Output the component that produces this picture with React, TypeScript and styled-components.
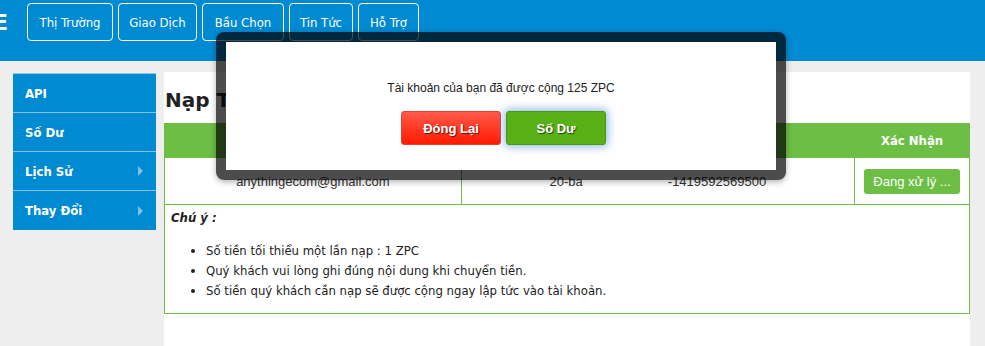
import React from "react";
import styled, { createGlobalStyle } from "styled-components";

const Global = createGlobalStyle`
  html, body { margin: 0; padding: 0; background: #eeeeee; }
  body { font-family: "DejaVu Sans", Verdana, sans-serif; font-stretch: condensed; overflow: hidden; }
  * { box-sizing: border-box; }
`;

const Page = styled.div`
  width: 985px;
  height: 346px;
  position: relative;
  background: #eeeeee;
  overflow: hidden;
`;

const Header = styled.header`
  height: 61px;
  background: #008ad2;
  display: flex;
  align-items: flex-start;
  padding-top: 3px;
  gap: 5px;
`;

const Logo = styled.div`
  width: 29px;
  margin-left: -7px;
  height: 38px;
  display: flex;
  align-items: center;
  color: #fff;
  font: bold 22px "DejaVu Sans", Verdana, sans-serif;
  font-stretch: normal;
`;

const NavButton = styled.a<{ $w: number }>`
  width: ${(p) => p.$w}px;
  height: 38px;
  border: 1px solid #fff;
  border-radius: 4px;
  color: #fff;
  display: flex;
  align-items: center;
  justify-content: center;
  font-size: 13px;
  text-decoration: none;
`;

const Body = styled.div`
  display: flex;
  align-items: flex-start;
  padding: 11px 15px 0 13px;
  gap: 8px;
`;

const Sidebar = styled.nav`
  width: 143px;
  margin-top: 1px;
  background: #008ad2;
  border-top: 1px solid #8cc8ea;
`;

const SideItem = styled.div<{ $last?: boolean }>`
  height: 39px;
  display: flex;
  align-items: center;
  justify-content: space-between;
  padding: 0 12px 0 12px;
  color: #fff;
  font-weight: bold;
  font-size: 13px;
  border-bottom: ${(p) => (p.$last ? "none" : "1px solid #7fc1e6")};
`;

const Arrow = styled.span`
  width: 0;
  height: 0;
  border-top: 5px solid transparent;
  border-bottom: 5px solid transparent;
  border-left: 5px solid #7fc1e6;
  margin-right: 1px;
`;

const Panel = styled.main`
  flex: 1;
  background: #fff;
  height: 280px;
`;

const Title = styled.h1`
  margin: 0;
  padding: 16px 0 0 1px;
  height: 51px;
  font-size: 20px;
  font-weight: bold;
  color: #222;
  font-stretch: normal;
`;

const Table = styled.table`
  width: 806px;
  border-collapse: collapse;
  font-family: "Liberation Sans", Arial, sans-serif;
  font-size: 13px;
  color: #333;
`;

const Th = styled.th<{ $w: number }>`
  width: ${(p) => p.$w}px;
  height: 34px;
  background: #6dbe45;
  color: #fff;
  border: 1px solid #6dbe45;
  font: bold 13px "DejaVu Sans", Verdana, sans-serif;
  font-stretch: condensed;
  text-align: center;
`;

const Td = styled.td`
  height: 47px;
  border: 1px solid #6dbe45;
  text-align: center;
  padding: 0;
`;

const Redact = styled.span`
  display: inline-block;
  width: 85px;
`;

const Pending = styled.span`
  display: inline-flex;
  align-items: center;
  justify-content: center;
  width: 96px;
  height: 25px;
  background: #6dbe45;
  border-radius: 3px;
  color: #fff;
  font-size: 13px;
`;

const Notes = styled.td`
  border: 1px solid #6dbe45;
  padding: 5px 6px 12px;
  text-align: left;
  font: 13px "DejaVu Sans", Verdana, sans-serif;
  font-stretch: condensed;
  color: #222;
`;

const NoteTitle = styled.div`
  font-weight: bold;
  font-style: italic;
`;

const NoteList = styled.ul`
  margin: 16px 0 0;
  padding-left: 35px;
  line-height: 20px;
`;

const ModalFrame = styled.div`
  position: absolute;
  left: 216px;
  top: 32px;
  width: 570px;
  height: 148px;
  padding: 10px;
  border-radius: 8px;
  background: rgba(0, 0, 0, 0.7);
  box-shadow: 0 2px 6px rgba(0, 0, 0, 0.3);
`;

const ModalBox = styled.div`
  background: #fff;
  height: 100%;
  display: flex;
  flex-direction: column;
  align-items: center;
  padding-top: 39px;
  font-family: "Liberation Sans", Arial, sans-serif;
  font-size: 12px;
  color: #222;
`;

const ModalButtons = styled.div`
  display: flex;
  gap: 5px;
  margin-top: 16px;
  margin-left: 5px;
`;

const ModalButton = styled.button<{ $kind: "red" | "green" }>`
  width: 100px;
  height: 34px;
  border-radius: 3px;
  font: bold 13px "Liberation Sans", Arial, sans-serif;
  color: #fff;
  text-shadow: 1px 1px 1px rgba(0, 0, 0, 0.6);
  cursor: pointer;
  ${(p) =>
    p.$kind === "red"
      ? `background: linear-gradient(#ff5a4a, #ff1a00); border: 1px solid #e04030;`
      : `background: #58b016; border: 1px solid #4a9810; box-shadow: 0 0 8px 2px rgba(80, 140, 230, 0.6);`}
`;

const navItems: [string, number][] = [
  ["Thị Trường", 86],
  ["Giao Dịch", 79],
  ["Bầu Chọn", 82],
  ["Tin Tức", 64],
  ["Hỗ Trợ", 61],
];

export default function App() {
  return (
    <Page>
      <Global />
      <Header>
        <Logo>E</Logo>
        {navItems.map(([t, w]) => (
          <NavButton key={t} $w={w}>
            {t}
          </NavButton>
        ))}
      </Header>
      <Body>
        <Sidebar>
          <SideItem>API</SideItem>
          <SideItem>Số Dư</SideItem>
          <SideItem>
            Lịch Sử <Arrow />
          </SideItem>
          <SideItem $last>
            Thay Đổi <Arrow />
          </SideItem>
        </Sidebar>
        <Panel>
          <Title>Nạp Tiền</Title>
          <Table>
            <thead>
              <tr>
                <Th $w={297}></Th>
                <Th $w={394}></Th>
                <Th $w={115}>Xác Nhận</Th>
              </tr>
            </thead>
            <tbody>
              <tr>
                <Td>anythingecom@gmail.com</Td>
                <Td>
                  20-ba<Redact />-1419592569500
                </Td>
                <Td>
                  <Pending>Đang xử lý ...</Pending>
                </Td>
              </tr>
              <tr>
                <Notes colSpan={3}>
                  <NoteTitle>Chú ý :</NoteTitle>
                  <NoteList>
                    <li>Số tiền tối thiểu một lần nạp : 1 ZPC</li>
                    <li>Quý khách vui lòng ghi đúng nội dung khi chuyển tiền.</li>
                    <li>Số tiền quý khách cần nạp sẽ được cộng ngay lập tức vào tài khoản.</li>
                  </NoteList>
                </Notes>
              </tr>
            </tbody>
          </Table>
        </Panel>
      </Body>
      <ModalFrame>
        <ModalBox>
          <div>Tài khoản của bạn đã được cộng 125 ZPC</div>
          <ModalButtons>
            <ModalButton $kind="red">Đóng Lại</ModalButton>
            <ModalButton $kind="green">Số Dư</ModalButton>
          </ModalButtons>
        </ModalBox>
      </ModalFrame>
    </Page>
  );
}
